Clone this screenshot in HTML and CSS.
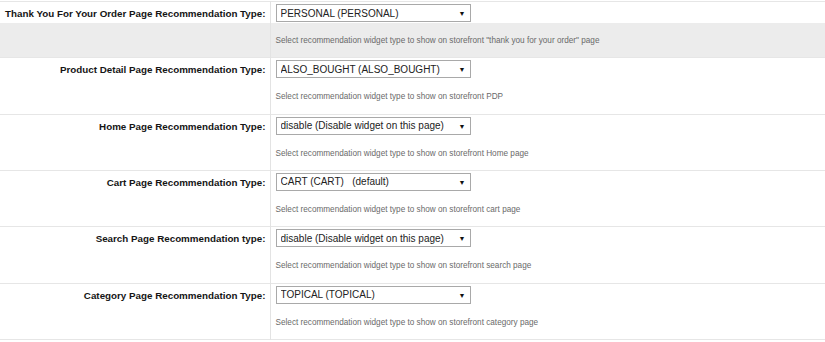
FILE: index.html
```html
<!DOCTYPE html>
<html lang="en">
<head>
  <meta charset="UTF-8">
  <title>Recommendation Settings</title>
  <link rel="stylesheet" href="styles.css">
</head>
<body>

  <table class="settings">
    <colgroup>
      <col class="label-col">
      <col>
    </colgroup>

    <tbody class="setting hover">
      <tr class="main">
        <td class="label">Thank You For Your Order Page Recommendation Type:</td>
        <td class="value">
          <span class="select-wrap">
            <select><option>PERSONAL (PERSONAL)</option></select>
            <span class="arrow">&#9660;</span>
          </span>
        </td>
      </tr>
      <tr class="desc">
        <td></td>
        <td class="value">Select recommendation widget type to show on storefront "thank you for your order" page</td>
      </tr>
    </tbody>

    <tbody class="setting">
      <tr class="main">
        <td class="label">Product Detail Page Recommendation Type:</td>
        <td class="value">
          <span class="select-wrap">
            <select><option>ALSO_BOUGHT (ALSO_BOUGHT)</option></select>
            <span class="arrow">&#9660;</span>
          </span>
        </td>
      </tr>
      <tr class="desc">
        <td></td>
        <td class="value">Select recommendation widget type to show on storefront PDP</td>
      </tr>
    </tbody>

    <tbody class="setting">
      <tr class="main">
        <td class="label">Home Page Recommendation Type:</td>
        <td class="value">
          <span class="select-wrap">
            <select><option>disable (Disable widget on this page)</option></select>
            <span class="arrow">&#9660;</span>
          </span>
        </td>
      </tr>
      <tr class="desc">
        <td></td>
        <td class="value">Select recommendation widget type to show on storefront Home page</td>
      </tr>
    </tbody>

    <tbody class="setting">
      <tr class="main">
        <td class="label">Cart Page Recommendation Type:</td>
        <td class="value">
          <span class="select-wrap">
            <select><option>CART (CART) &nbsp; (default)</option></select>
            <span class="arrow">&#9660;</span>
          </span>
        </td>
      </tr>
      <tr class="desc">
        <td></td>
        <td class="value">Select recommendation widget type to show on storefront cart page</td>
      </tr>
    </tbody>

    <tbody class="setting">
      <tr class="main">
        <td class="label">Search Page Recommendation type:</td>
        <td class="value">
          <span class="select-wrap">
            <select><option>disable (Disable widget on this page)</option></select>
            <span class="arrow">&#9660;</span>
          </span>
        </td>
      </tr>
      <tr class="desc">
        <td></td>
        <td class="value">Select recommendation widget type to show on storefront search page</td>
      </tr>
    </tbody>

    <tbody class="setting">
      <tr class="main">
        <td class="label">Category Page Recommendation Type:</td>
        <td class="value">
          <span class="select-wrap">
            <select><option>TOPICAL (TOPICAL)</option></select>
            <span class="arrow">&#9660;</span>
          </span>
        </td>
      </tr>
      <tr class="desc">
        <td></td>
        <td class="value">Select recommendation widget type to show on storefront category page</td>
      </tr>
    </tbody>
  </table>

</body>
</html>
```

FILE: styles.css
```css
body {
  margin: 0;
  padding-top: 1px;
  background: #ffffff;
  font-family: "Liberation Sans", Arial, sans-serif;
  color: #222;
}

.settings {
  width: 100%;
  table-layout: fixed;
  border-collapse: collapse;
}

.label-col {
  width: 270px;
}

.settings td {
  padding: 0;
  box-sizing: border-box;
}

.setting {
  border-top: 1px solid #e6e6e6;
}

.setting:last-child {
  border-bottom: 1px solid #e6e6e6;
}

.main {
  height: 21px;
}

.main td {
  vertical-align: top;
}

.desc {
  height: 35.33px;
}

.desc td {
  vertical-align: middle;
  padding-top: 1px !important;
}

.setting.hover .desc td {
  background: #ececec;
}

.label {
  padding: 6px 4px 0 0 !important;
  text-align: right;
  font-weight: bold;
  font-size: 9.8px;
  line-height: 12px;
  white-space: nowrap;
  color: #151515;
}

.value {
  border-left: 1px solid #e3e3e3;
  padding-left: 5px !important;
  font-size: 8.2px;
  color: #6a6a6a;
}

.main .value {
  padding-top: 2px !important;
  line-height: 0;
}

.select-wrap {
  position: relative;
  display: inline-block;
  vertical-align: top;
}

select {
  appearance: none;
  -webkit-appearance: none;
  display: block;
  width: 195px;
  height: 18px;
  margin: 0;
  padding: 0 4px;
  border: 1px solid #a9a9a9;
  border-radius: 0;
  background: #fff;
  font-family: "Liberation Sans", Arial, sans-serif;
  font-size: 10px;
  color: #222;
}

.arrow {
  position: absolute;
  right: 5px;
  top: 6px;
  font-size: 7px;
  line-height: 7px;
  color: #111;
  pointer-events: none;
}
```
